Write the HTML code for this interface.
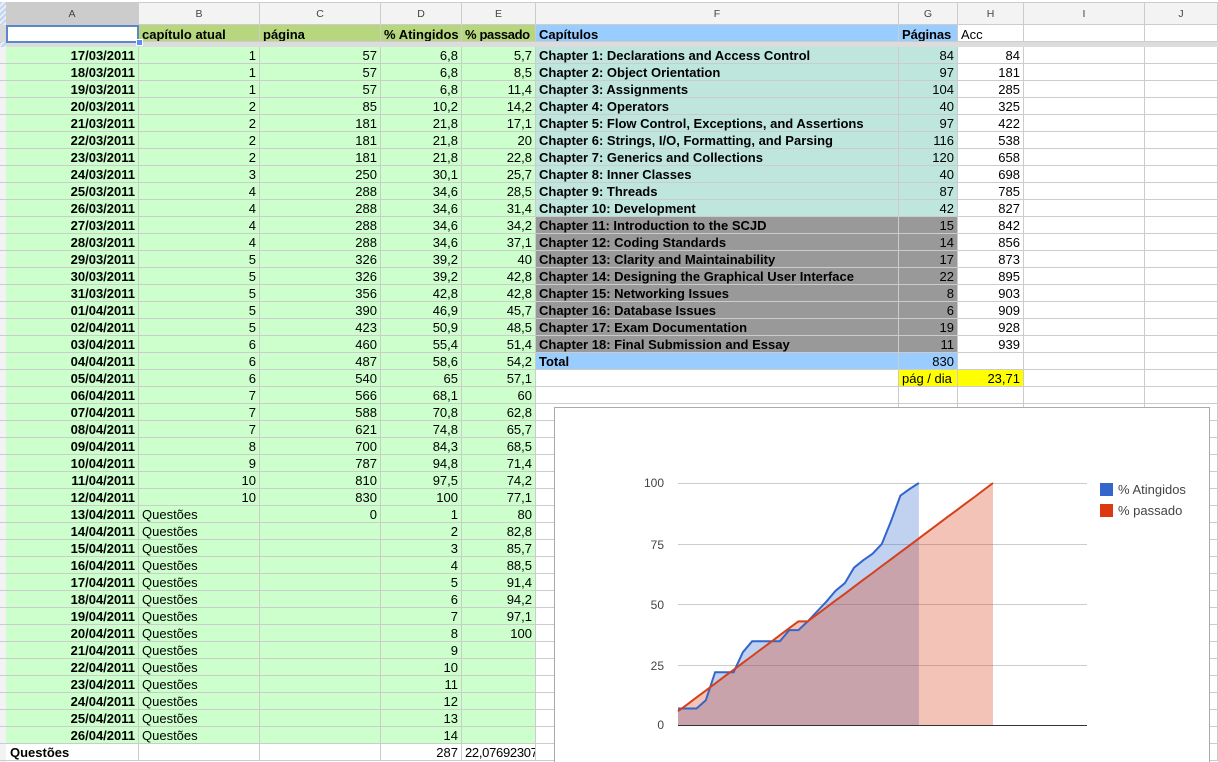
<!DOCTYPE html>
<html><head><meta charset="utf-8"><style>
html,body{margin:0;padding:0;width:1218px;height:762px;overflow:hidden;background:#fff}
body{position:relative;font-family:"Liberation Sans",Arial,sans-serif;font-size:13px;color:#000}
#rh{position:absolute;left:0;top:47px;width:6px;height:715px;background:repeating-linear-gradient(#f3f3f3 0 16px,#ccc 16px 17px)}
#rh1{position:absolute;left:0;top:2px;width:6px;height:45px;background:repeating-linear-gradient(135deg,#c3d3ee 0 2px,#e8eefa 2px 4px)}
#rh2{position:absolute;left:0;top:25px;width:6px;height:17px;background:#d9d9d9}
#top{position:absolute;left:0;top:2px;height:23px;width:1218px;border-top:1px solid #ccc;box-sizing:border-box}
#top div{position:absolute;top:0;height:22px;line-height:22px;text-align:center;font-size:10.5px;color:#444;background:#f3f3f3;border-right:1px solid #ccc;border-bottom:1px solid #ccc;box-sizing:border-box}
table{position:absolute;left:6px;top:25px;width:1212px;table-layout:fixed;border-collapse:separate;border-spacing:0}
td{box-sizing:border-box;height:17px;padding:2px 3px 0 3px;line-height:14px;border-right:1px solid #ccc;border-bottom:1px solid #ccc;overflow:hidden;white-space:nowrap;text-align:right}
tr.h td{padding-top:3px;line-height:13px}
tr.g td:nth-child(-n+5){background:#cfc}
tr.g td:first-child,td.b{font-weight:bold}
td.l{text-align:left}
td.t{background:#bfe6dd}
td.k{background:#999}
td.u{background:#9cf}
td.o{background:#b6d77d;font-weight:bold;text-align:left}
td.y{background:#ff0}
td.f{height:5px;padding:0;line-height:0;font-size:0;background:#dcdcdc;border:0}
#sel{position:absolute;left:6px;top:25px;width:133px;height:18px;border:2px solid #5a87c8;box-sizing:border-box}
#hd{position:absolute;left:136px;top:39px;width:7px;height:7px;box-sizing:border-box;background:#5b8ff0;border:1px solid #fff}
svg{position:absolute;left:0;top:0}
svg text{font-family:"Liberation Sans",Arial,sans-serif;font-size:12px;fill:#444}
svg text.lg{font-size:13px}
</style></head><body>
<div id="top">
<div style="left:6px;width:133px;background:#ccc">A</div>
<div style="left:139px;width:121px">B</div>
<div style="left:260px;width:121px">C</div>
<div style="left:381px;width:81px">D</div>
<div style="left:462px;width:74px">E</div>
<div style="left:536px;width:363px">F</div>
<div style="left:899px;width:59px">G</div>
<div style="left:958px;width:66px">H</div>
<div style="left:1024px;width:121px">I</div>
<div style="left:1145px;width:73px">J</div>
</div>
<div id="rh1"></div><div id="rh2"></div><div id="rh"></div>
<table><colgroup><col style="width:133px"><col style="width:121px"><col style="width:121px"><col style="width:81px"><col style="width:74px"><col style="width:363px"><col style="width:59px"><col style="width:66px"><col style="width:121px"><col style="width:73px"></colgroup>
<tr class="h"><td><td class="o">capítulo atual<td class="o">página<td class="o">% Atingidos<td class="o" style="letter-spacing:-.35px">% passado<td class="u b l">Capítulos<td class="u b l" style="letter-spacing:-.1px">Páginas<td class="l">Acc<td><td></tr>
<tr><td class="f" colspan="10"></tr>
<tr class="g"><td>17/03/2011<td>1<td>57<td>6,8<td>5,7<td class="t b l">Chapter 1: Declarations and Access Control<td class="t">84<td>84<td><td></tr>
<tr class="g"><td>18/03/2011<td>1<td>57<td>6,8<td>8,5<td class="t b l">Chapter 2: Object Orientation<td class="t">97<td>181<td><td></tr>
<tr class="g"><td>19/03/2011<td>1<td>57<td>6,8<td>11,4<td class="t b l">Chapter 3: Assignments<td class="t">104<td>285<td><td></tr>
<tr class="g"><td>20/03/2011<td>2<td>85<td>10,2<td>14,2<td class="t b l">Chapter 4: Operators<td class="t">40<td>325<td><td></tr>
<tr class="g"><td>21/03/2011<td>2<td>181<td>21,8<td>17,1<td class="t b l">Chapter 5: Flow Control, Exceptions, and Assertions<td class="t">97<td>422<td><td></tr>
<tr class="g"><td>22/03/2011<td>2<td>181<td>21,8<td>20<td class="t b l">Chapter 6: Strings, I/O, Formatting, and Parsing<td class="t">116<td>538<td><td></tr>
<tr class="g"><td>23/03/2011<td>2<td>181<td>21,8<td>22,8<td class="t b l">Chapter 7: Generics and Collections<td class="t">120<td>658<td><td></tr>
<tr class="g"><td>24/03/2011<td>3<td>250<td>30,1<td>25,7<td class="t b l">Chapter 8: Inner Classes<td class="t">40<td>698<td><td></tr>
<tr class="g"><td>25/03/2011<td>4<td>288<td>34,6<td>28,5<td class="t b l">Chapter 9: Threads<td class="t">87<td>785<td><td></tr>
<tr class="g"><td>26/03/2011<td>4<td>288<td>34,6<td>31,4<td class="t b l">Chapter 10: Development<td class="t">42<td>827<td><td></tr>
<tr class="g"><td>27/03/2011<td>4<td>288<td>34,6<td>34,2<td class="k b l">Chapter 11: Introduction to the SCJD<td class="k">15<td>842<td><td></tr>
<tr class="g"><td>28/03/2011<td>4<td>288<td>34,6<td>37,1<td class="k b l">Chapter 12: Coding Standards<td class="k">14<td>856<td><td></tr>
<tr class="g"><td>29/03/2011<td>5<td>326<td>39,2<td>40<td class="k b l">Chapter 13: Clarity and Maintainability<td class="k">17<td>873<td><td></tr>
<tr class="g"><td>30/03/2011<td>5<td>326<td>39,2<td>42,8<td class="k b l">Chapter 14: Designing the Graphical User Interface<td class="k">22<td>895<td><td></tr>
<tr class="g"><td>31/03/2011<td>5<td>356<td>42,8<td>42,8<td class="k b l">Chapter 15: Networking Issues<td class="k">8<td>903<td><td></tr>
<tr class="g"><td>01/04/2011<td>5<td>390<td>46,9<td>45,7<td class="k b l">Chapter 16: Database Issues<td class="k">6<td>909<td><td></tr>
<tr class="g"><td>02/04/2011<td>5<td>423<td>50,9<td>48,5<td class="k b l">Chapter 17: Exam Documentation<td class="k">19<td>928<td><td></tr>
<tr class="g"><td>03/04/2011<td>6<td>460<td>55,4<td>51,4<td class="k b l">Chapter 18: Final Submission and Essay<td class="k">11<td>939<td><td></tr>
<tr class="g"><td>04/04/2011<td>6<td>487<td>58,6<td>54,2<td class="u b l">Total<td class="u">830<td><td><td></tr>
<tr class="g"><td>05/04/2011<td>6<td>540<td>65<td>57,1<td><td class="y l">pág / dia<td class="y">23,71<td><td></tr>
<tr class="g"><td>06/04/2011<td>7<td>566<td>68,1<td>60<td><td><td><td><td></tr>
<tr class="g"><td>07/04/2011<td>7<td>588<td>70,8<td>62,8<td><td><td><td><td></tr>
<tr class="g"><td>08/04/2011<td>7<td>621<td>74,8<td>65,7<td><td><td><td><td></tr>
<tr class="g"><td>09/04/2011<td>8<td>700<td>84,3<td>68,5<td><td><td><td><td></tr>
<tr class="g"><td>10/04/2011<td>9<td>787<td>94,8<td>71,4<td><td><td><td><td></tr>
<tr class="g"><td>11/04/2011<td>10<td>810<td>97,5<td>74,2<td><td><td><td><td></tr>
<tr class="g"><td>12/04/2011<td>10<td>830<td>100<td>77,1<td><td><td><td><td></tr>
<tr class="g"><td>13/04/2011<td class="l">Questões<td>0<td>1<td>80<td><td><td><td><td></tr>
<tr class="g"><td>14/04/2011<td class="l">Questões<td><td>2<td>82,8<td><td><td><td><td></tr>
<tr class="g"><td>15/04/2011<td class="l">Questões<td><td>3<td>85,7<td><td><td><td><td></tr>
<tr class="g"><td>16/04/2011<td class="l">Questões<td><td>4<td>88,5<td><td><td><td><td></tr>
<tr class="g"><td>17/04/2011<td class="l">Questões<td><td>5<td>91,4<td><td><td><td><td></tr>
<tr class="g"><td>18/04/2011<td class="l">Questões<td><td>6<td>94,2<td><td><td><td><td></tr>
<tr class="g"><td>19/04/2011<td class="l">Questões<td><td>7<td>97,1<td><td><td><td><td></tr>
<tr class="g"><td>20/04/2011<td class="l">Questões<td><td>8<td>100<td><td><td><td><td></tr>
<tr class="g"><td>21/04/2011<td class="l">Questões<td><td>9<td><td><td><td><td><td></tr>
<tr class="g"><td>22/04/2011<td class="l">Questões<td><td>10<td><td><td><td><td><td></tr>
<tr class="g"><td>23/04/2011<td class="l">Questões<td><td>11<td><td><td><td><td><td></tr>
<tr class="g"><td>24/04/2011<td class="l">Questões<td><td>12<td><td><td><td><td><td></tr>
<tr class="g"><td>25/04/2011<td class="l">Questões<td><td>13<td><td><td><td><td><td></tr>
<tr class="g"><td>26/04/2011<td class="l">Questões<td><td>14<td><td><td><td><td><td></tr>
<tr><td class="b l" style="padding-left:4px">Questões<td><td><td>287<td class="l" style="padding-right:0;letter-spacing:-.3px">22,07692307<td><td><td><td><td></tr>
</table>
<div id="sel"></div><div id="hd"></div>
<svg width="1218" height="762" viewBox="0 0 1218 762">
<rect x="554.5" y="407.5" width="655" height="360" fill="#fff" stroke="#aaa"/>
<g stroke="#ccc" stroke-width="1"><path d="M678 483.5H1087M678 544.5H1087M678 604.5H1087M678 665.5H1087"/></g>
<path fill="#3366cc" fill-opacity=".3" d="M678 725V708.5L687.3 708.5 696.5 708.5 705.8 700.3 715.1 672.2 724.3 672.2 733.6 672.2 742.9 652.2 752.1 641.3 761.4 641.3 770.7 641.3 779.9 641.3 789.2 630.1 798.4 630.1 807.7 621.4 817 611.5 826.2 601.8 835.5 590.9 844.8 583.2 854 567.7 863.3 560.2 872.6 553.7 881.8 544 891.1 521 900.4 495.6 909.6 489 918.9 483V725Z"/>
<path fill="#dc3912" fill-opacity=".3" d="M678 725V711.2L687.3 704.4 696.5 697.4 705.8 690.6 715.1 683.6 724.3 676.6 733.6 669.8 742.9 662.8 752.1 656 761.4 649 770.7 642.2 779.9 635.2 789.2 628.2 798.4 621.4 807.7 621.4 817 614.4 826.2 607.6 835.5 600.6 844.8 593.8 854 586.8 863.3 579.8 872.6 573 881.8 566 891.1 559.2 900.4 552.2 909.6 545.4 918.9 538.4 928.2 531.4 937.4 524.6 946.7 517.6 955.9 510.8 965.2 503.8 974.5 497 983.7 490 993 483V725Z"/>
<path fill="none" stroke="#3366cc" stroke-width="2" d="M678 708.5L687.3 708.5 696.5 708.5 705.8 700.3 715.1 672.2 724.3 672.2 733.6 672.2 742.9 652.2 752.1 641.3 761.4 641.3 770.7 641.3 779.9 641.3 789.2 630.1 798.4 630.1 807.7 621.4 817 611.5 826.2 601.8 835.5 590.9 844.8 583.2 854 567.7 863.3 560.2 872.6 553.7 881.8 544 891.1 521 900.4 495.6 909.6 489 918.9 483"/>
<path fill="none" stroke="#d5401a" stroke-width="2" d="M678 711.2L687.3 704.4 696.5 697.4 705.8 690.6 715.1 683.6 724.3 676.6 733.6 669.8 742.9 662.8 752.1 656 761.4 649 770.7 642.2 779.9 635.2 789.2 628.2 798.4 621.4 807.7 621.4 817 614.4 826.2 607.6 835.5 600.6 844.8 593.8 854 586.8 863.3 579.8 872.6 573 881.8 566 891.1 559.2 900.4 552.2 909.6 545.4 918.9 538.4 928.2 531.4 937.4 524.6 946.7 517.6 955.9 510.8 965.2 503.8 974.5 497 983.7 490 993 483"/>
<path d="M678 725.5H1087" stroke="#333" stroke-width="1"/>
<g text-anchor="end"><text x="664" y="487">100</text><text x="664" y="549">75</text><text x="664" y="609">50</text><text x="664" y="670">25</text><text x="664" y="729">0</text></g>
<rect x="1100" y="483" width="13" height="13" fill="#3366cc"/><rect x="1100" y="504" width="13" height="13" fill="#dc3912"/>
<text class="lg" x="1118" y="494">% Atingidos</text><text class="lg" x="1118" y="515">% passado</text>
</svg>
</body></html>
